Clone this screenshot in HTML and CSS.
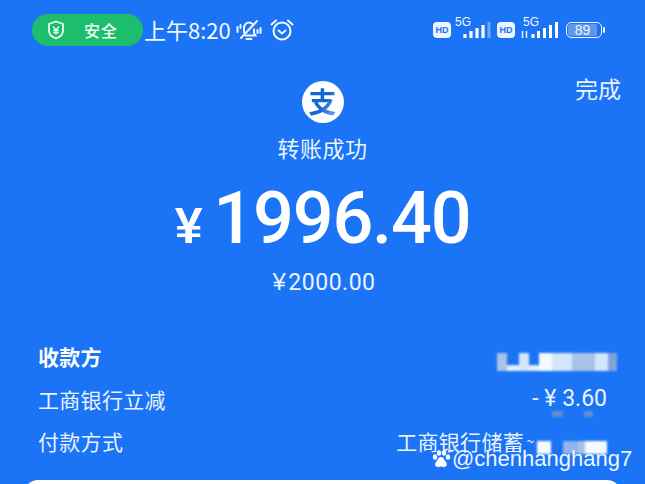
FILE: index.html
```html
<!DOCTYPE html>
<html>
<head>
<meta charset="utf-8">
<link rel="stylesheet" href="styles.css">
</head>
<body>
<div class="page">
    <div class="statusbar">
        <div class="pill">
            <svg class="shield" width="18" height="20" viewBox="0 0 18 20">
                <path d="M9 1.500 16 4v7c0 3.600-3 5.900-7 7.500C5 16.900 2 14.600 2 11V4z" fill="none" stroke="#eafff3" stroke-width="1.700"/>
                <path d="M6 6.500 9 10l3-3.500M9 10v4.500M6.300 10.500h5.400M6.300 12.700h5.400" fill="none" stroke="#eafff3" stroke-width="1.300"/>
            </svg>
            <span class="pill-text">安全</span>
        </div>
        <span class="clock">上午8:20</span>
        <svg class="bell" width="26" height="24" viewBox="0 0 26 24">
            <path d="M8 15V10c0-3 2.200-5.500 5-5.500 1.800 0 3.300.9 4.200 2.300M18 10.500V15l1.500 2.500H9" fill="none" stroke="#f2f8ff" stroke-width="2"/>
            <path d="M10.500 21h5M5 20 21 3M1.500 9v5M4.500 7v3M24.500 10v5M21.500 12v3" fill="none" stroke="#f2f8ff" stroke-width="2" stroke-linecap="round"/>
        </svg>
        <svg class="alarm" width="24" height="24" viewBox="0 0 24 24">
            <circle cx="12" cy="13" r="8.500" fill="none" stroke="#f2f8ff" stroke-width="2"/>
            <path d="M8.500 12.500 12 15.500l3.500-3M1.500 6.500 6 2.500M22.500 6.500 18 2.500" fill="none" stroke="#f2f8ff" stroke-width="2" stroke-linecap="round"/>
        </svg>
        <div class="status-right">
            <span class="hd">HD</span>
            <span class="net net-first">
                <span class="fiveg">5G</span>
                <svg width="28" height="16" viewBox="0 0 28 16">
                    <path d="M2 12v4M8 9v7M14 6v10M20 3v13" stroke="#fff" stroke-width="3.200" fill="none"/>
                    <path d="M26 0v16" stroke="#6fa8f7" stroke-width="3" fill="none"/>
                </svg>
            </span>
            <span class="hd">HD</span>
            <span class="net net-second">
                <span class="fiveg">5G</span>
                <svg width="38" height="16" viewBox="0 0 38 16">
                    <path d="M2.500 9v7M6.500 9v7" stroke="#e4efff" stroke-width="1.500" fill="none"/>
                    <path d="M13 12v4M18.500 9v7M24.500 6v10M30.500 3v13M36.500 0v16" stroke="#fff" stroke-width="3" fill="none"/>
                </svg>
            </span>
            <span class="battery"><span class="battery-level">89</span></span>
            <span class="battery-cap"></span>
        </div>
    </div>

    <div class="done-row"><span class="done">完成</span></div>

    <div class="summary">
        <div class="logo"><span class="logo-mark">支</span></div>
        <div class="title">转账成功</div>
        <div class="amount"><span class="yen">¥</span>1996.40</div>
        <div class="original"><span class="yen-small">¥</span>2000.00</div>
    </div>

    <div class="rows">
        <div class="row">
            <span class="label strong">收款方</span>
            <span class="mosaic mosaic-name">
                <i class="w10 grey"></i><i class="w12 strip"></i><i class="w10 pale"></i><i class="w10 strip"></i><i class="w13 white"></i><i class="w20 pale"></i><i class="w23 grey"></i><i class="w13 pale"></i><i class="w9 dark"></i>
            </span>
        </div>
        <div class="row">
            <span class="label">工商银行立减</span>
            <span class="value discount">- ¥ 3.60<span class="smudge smudge-a"></span><span class="smudge smudge-b"></span></span>
        </div>
        <div class="row">
            <span class="label">付款方式</span>
            <span class="value bank">工商银行储蓄<span class="dash">~</span><span class="mosaic mosaic-card"><i class="w14 white"></i><i class="w12 none"></i><i class="w15 mid"></i><i class="w7 grey"></i><i class="w22 white"></i></span></span>
        </div>
    </div>

    <div class="card"></div>

    <div class="watermark">
        <svg width="20" height="20" viewBox="0 0 20 20">
            <ellipse cx="4" cy="8" rx="2.200" ry="2.800" fill="#fff"/>
            <ellipse cx="8" cy="4" rx="2.200" ry="2.800" fill="#fff"/>
            <ellipse cx="13" cy="4" rx="2.200" ry="2.800" fill="#fff"/>
            <ellipse cx="17" cy="8" rx="2.200" ry="2.800" fill="#fff"/>
            <path d="M10 8c3 0 3 3 5 5 2 3 0 5-2.500 5-1.200 0-1.800-.5-2.500-.5s-1.300.5-2.500.5C5 18 3 16 5 13c2-2 2-5 5-5z" fill="#fff"/>
        </svg>
        <span>@chenhanghang7</span>
    </div>
</div>
</body>
</html>
```

FILE: styles.css
```css
html, body {
    margin: 0;
    padding: 0;
}
body {
    font-family: "Noto Sans CJK SC", "Liberation Sans", sans-serif;
    color: #fff;
}
.page {
    position: relative;
    display: flex;
    flex-direction: column;
    width: 645px;
    height: 484px;
    overflow: hidden;
    background: #1a74f5;
}

/* status bar */
.statusbar {
    display: flex;
    align-items: center;
    height: 32px;
    padding: 14px 40px 0 32px;
}
.pill {
    display: flex;
    align-items: center;
    width: 111px;
    height: 32px;
    box-sizing: border-box;
    padding-left: 15px;
    border-radius: 16px;
    background: #1dbd6e;
}
.pill-text {
    margin-left: 19px;
    font-size: 16px;
    font-weight: 500;
    letter-spacing: 1px;
    color: #eafff3;
}
.clock {
    margin-top: -2px;
    margin-left: 1px;
    font-size: 22px;
    line-height: 32px;
    color: #f2f8ff;
    white-space: nowrap;
}
.bell {
    margin-left: 5px;
}
.alarm {
    margin-left: 8px;
}
.status-right {
    display: flex;
    align-items: center;
    margin-left: auto;
}
.hd {
    width: 18px;
    height: 16px;
    border-radius: 4px;
    background: #eef5ff;
    color: #1a74f5;
    font: bold 9px/16px "Liberation Sans", sans-serif;
    text-align: center;
}
.net {
    position: relative;
    display: flex;
    align-items: flex-end;
    height: 24px;
    margin: 0 6px 0 0;
}
.net-first {
    padding-left: 12px;
}
.net-second {
    padding-left: 5px;
    margin-right: 8px;
}
.fiveg {
    position: absolute;
    top: -3px;
    font: 12px/14px "Liberation Sans", sans-serif;
    color: #f2f8ff;
}
.net-first .fiveg {
    left: 4px;
}
.net-second .fiveg {
    left: 8px;
}
.net svg {
    margin-bottom: 4px;
}
.battery {
    display: flex;
    width: 36px;
    height: 16px;
    box-sizing: border-box;
    border: 1.500px solid #eef5ff;
    border-radius: 5px;
    padding: 1px;
}
.battery-level {
    width: 29px;
    border-radius: 2px;
    background: #5f97ea;
    font: 14px/13px "Liberation Sans", sans-serif;
    text-align: center;
    color: #eef5ff;
}
.battery-cap {
    width: 2px;
    height: 6px;
    margin-left: 1px;
    border-radius: 1px;
    background: #eef5ff;
}

/* header action */
.done-row {
    display: flex;
    justify-content: flex-end;
    padding: 26px 24px 0 0;
}
.done {
    font-size: 23px;
    line-height: 32px;
    color: #eaf3ff;
}

/* amount block */
.summary {
    display: flex;
    flex-direction: column;
    align-items: center;
    margin-top: -23px;
}
.logo {
    width: 42px;
    height: 42px;
    border-radius: 50%;
    background: #fff;
    text-align: center;
}
.logo-mark {
    font-size: 28px;
    font-weight: 700;
    line-height: 41px;
    background: linear-gradient(120deg, #1465d6 55%, #8fb8f0);
    -webkit-background-clip: text;
    background-clip: text;
    color: transparent;
}
.title {
    margin-top: 9px;
    font-size: 22px;
    line-height: 30px;
    letter-spacing: .5px;
    color: #eaf3ff;
}
.amount {
    display: flex;
    align-items: baseline;
    margin-top: 15px;
    font-family: Roboto, sans-serif;
    font-size: 72px;
    font-weight: 500;
    line-height: 84px;
    letter-spacing: -1.200px;
}
.yen {
    margin-right: 12px;
    font-size: 50px;
    font-family: "Liberation Sans", sans-serif;
    font-weight: 700;
}
.original {
    margin-top: 0;
    padding-left: 3px;
    font-family: Roboto, sans-serif;
    font-size: 23px;
    line-height: 28px;
    letter-spacing: .5px;
    color: #eaf3ff;
}
.yen-small {
    margin-right: 2px;
    font-family: "Liberation Sans", sans-serif;
    font-size: 24px;
}

/* detail rows */
.rows {
    display: flex;
    flex-direction: column;
    gap: 10.500px;
    margin-top: 43px;
    padding: 0 28px 0 38px;
}
.row {
    display: flex;
    align-items: center;
    justify-content: space-between;
    height: 32px;
    font-size: 21px;
    letter-spacing: .3px;
    color: #eaf3ff;
}
.strong {
    font-weight: 700;
    color: #fff;
}
.value {
    white-space: nowrap;
}
.discount {
    position: relative;
    margin-right: 10px;
    font-family: Roboto, sans-serif;
    font-size: 23px;
    letter-spacing: 0;
}
.smudge {
    position: absolute;
    top: 26px;
    height: 6px;
    background: #5f8fd0;
    filter: blur(1px);
}
.smudge-a {
    left: 20px;
    width: 11px;
}
.smudge-b {
    left: 52px;
    width: 9px;
}
.bank {
    display: flex;
    align-items: center;
    margin-right: 10px;
}
.dash {
    width: 13px;
    font-size: 14px;
    line-height: 14px;
    text-align: center;
}

/* blurred-out account details */
.mosaic {
    display: flex;
    filter: blur(1px);
}
.mosaic i {
    display: block;
    height: 18px;
}
.mosaic-name {
    margin-top: 12px;
}
.mosaic-card {
    margin-top: 13px;
}
.mosaic-card i {
    height: 13px;
}
.w7 { width: 7px; }
.w9 { width: 9px; }
.w10 { width: 10px; }
.w12 { width: 12px; }
.w13 { width: 13px; }
.w14 { width: 14px; }
.w15 { width: 15px; }
.w20 { width: 20px; }
.w22 { width: 22px; }
.w23 { width: 23px; }
.none { background: #1a74f5; }
.grey { background: #a9c3e6; }
.pale { background: #d5e6fb; }
.white { background: #f6faff; }
.mid { background: #8fb4ee; }
.dark { background: #7fa4d8; }
.strip { background: linear-gradient(#1a74f5 65%, #e4effd 70%); }

/* sheet peeking in at the bottom edge */
.card {
    position: absolute;
    left: 24px;
    right: 24px;
    top: 480px;
    height: 30px;
    border-radius: 14px 14px 0 0;
    background: #fff;
}

.watermark {
    position: absolute;
    left: 431px;
    top: 447px;
    display: flex;
    align-items: center;
    gap: 1px;
    font: 22px/24px "Liberation Sans", sans-serif;
    color: #eef5ff;
}
```
